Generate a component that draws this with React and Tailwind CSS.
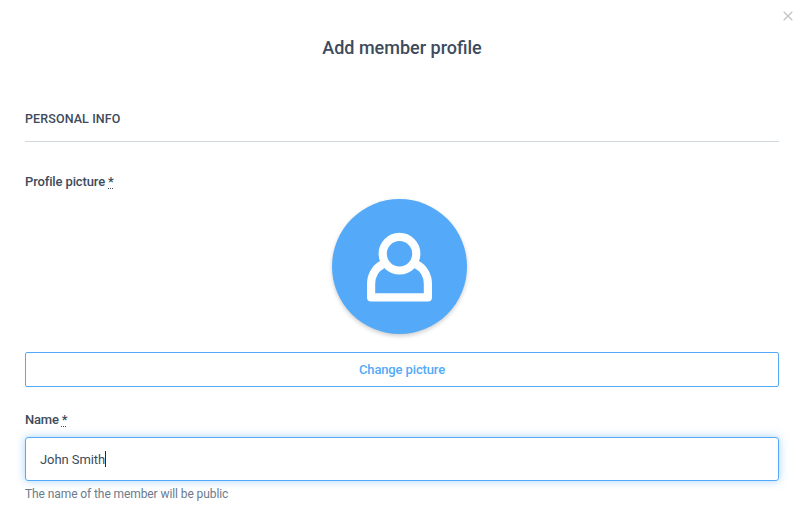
import React from 'react';

const Required = () => (
  <abbr
    title="required"
    className="underline decoration-dotted decoration-1 underline-offset-[2px]"
  >
    *
  </abbr>
);

const CloseIcon = () => (
  <svg className="h-[10px] w-[10px]" viewBox="0 0 10 10" fill="none" stroke="#c4c4c4" strokeWidth="1.3">
    <path d="M0.7 0.7L9.3 9.3M9.3 0.7L0.7 9.3" />
  </svg>
);

const AvatarIcon = () => (
  <svg className="h-full w-full" viewBox="0 0 135 135" fill="none" stroke="#fff" strokeWidth="8.2" strokeLinejoin="round">
    <circle cx="67.5" cy="54.7" r="16.8" />
    <path d="M50.5 65.5C43.5 69 39.1 76.5 39.1 85V98.4H95.9V85C95.9 76.5 91.5 69 84.5 65.5" />
  </svg>
);

const App = () => {
  return (
    <div className="relative h-[506px] w-[805px] overflow-hidden bg-white px-[25px] font-['Roboto',sans-serif] text-[13px] text-[#3d4b5c]">
      <button type="button" aria-label="Close" className="absolute right-[12px] top-[11px]">
        <CloseIcon />
      </button>

      <form className="w-[754px]">
        <h1 className="pt-[34px] text-center text-[18px] font-medium leading-[28px]">
          Add member profile
        </h1>

        <h2 className="mt-[46px] h-[34px] border-b border-[#d0d8e0] text-[12.5px] font-medium leading-[21px] tracking-[0.11px]">
          PERSONAL INFO
        </h2>

        <div className="mt-[30px]">
          <label className="block font-medium leading-[20px] tracking-[-0.13px]">
            Profile picture <Required />
          </label>
          <div className="ml-[307px] mt-[7px] h-[135px] w-[135px] rounded-full bg-[#54aaf8] shadow-[0_2px_4px_rgba(0,0,0,0.2)]">
            <AvatarIcon />
          </div>
          <button
            type="button"
            className="mt-[18px] block h-[35px] w-full rounded-[2px] border border-[#54aaf8] text-center font-medium tracking-[-0.13px] text-[#54aaf8]"
          >
            Change picture
          </button>
        </div>

        <div className="mt-[23px]">
          <label className="block font-medium leading-[20px] tracking-[-0.2px]">
            Name <Required />
          </label>
          <div className="mt-[7px] flex h-[44px] items-center rounded-[3px] border border-[#54aaf8] px-[14px] shadow-[0_0_8px_rgba(84,170,248,0.5)]">
            <span className="pt-[2px] tracking-[-0.08px]">John Smith</span>
            <span className="h-[16px] w-px bg-[#222b36]" />
          </div>
          <p className="mt-[4px] text-[12px] leading-[18px] tracking-[-0.09px] text-[#6b7a8c]">
            The name of the member will be public
          </p>
        </div>
      </form>
    </div>
  );
};

export default App;
